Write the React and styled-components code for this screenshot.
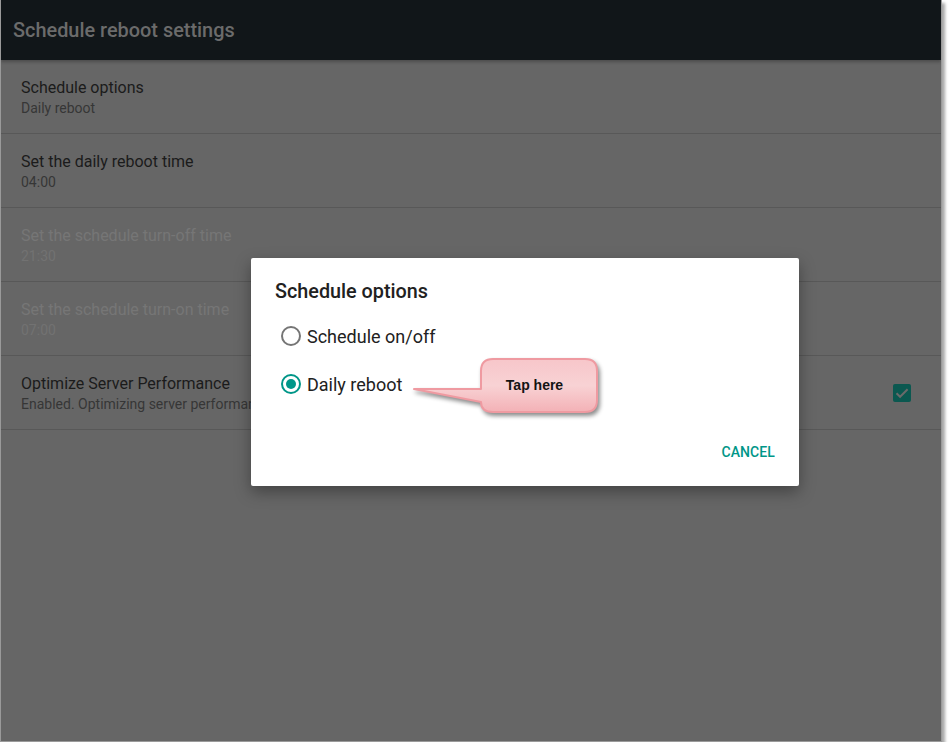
import React from 'react';
import styled, { createGlobalStyle } from 'styled-components';

const GlobalStyle = createGlobalStyle`
  html, body {
    margin: 0;
    padding: 0;
    background: #ffffff;
  }
  body {
    font-family: Roboto, "Noto Sans", sans-serif;
  }
`;

const Screen = styled.div`
  position: relative;
  box-sizing: border-box;
  width: 942px;
  height: 742px;
  border: 1px solid #9a9a9a;
  border-top: none;
  background: #666666;
  box-shadow: 3px 3px 3px rgba(0, 0, 0, 0.35);
  display: flex;
  flex-direction: column;
  overflow: hidden;
`;

const TitleBar = styled.header`
  height: 60px;
  flex-shrink: 0;
  background: #111619;
  display: flex;
  align-items: center;
  padding: 0 12px;
  box-shadow: 0 2px 3px rgba(0, 0, 0, 0.25);
  z-index: 1;
`;

const Title = styled.h1`
  margin: 0;
  font-size: 19.9px;
  font-weight: 500;
  color: #6b6b6b;
`;

const List = styled.div`
  display: flex;
  flex-direction: column;
`;

const Row = styled.div`
  box-sizing: border-box;
  height: 74px;
  padding: 18px 30px 0 20px;
  border-bottom: 1px solid #585858;
  display: flex;
  align-items: flex-start;
  justify-content: space-between;
`;

const RowText = styled.div`
  display: flex;
  flex-direction: column;
`;

const RowTitle = styled.div`
  font-size: 16px;
  line-height: 20px;
  color: ${(p) => (p.disabled ? '#767676' : '#1b1b1b')};
`;

const RowSub = styled.div`
  font-size: 14px;
  line-height: 20px;
  color: ${(p) => (p.disabled ? '#727272' : '#363636')};
`;

const Checkbox = styled.span`
  width: 18px;
  height: 18px;
  margin-top: 10px;
  border-radius: 2px;
  background: #0b5850;
  display: flex;
  align-items: center;
  justify-content: center;
`;

const Dialog = styled.div`
  position: absolute;
  left: 250px;
  top: 258px;
  width: 548px;
  height: 228px;
  box-sizing: border-box;
  background: #ffffff;
  border-radius: 2px;
  box-shadow: 0 6px 16px rgba(0, 0, 0, 0.35);
  display: flex;
  flex-direction: column;
  padding: 22px 0 0 0;
`;

const DialogTitle = styled.h2`
  margin: 0 0 8px 24px;
  font-size: 19.8px;
  line-height: 24px;
  font-weight: 500;
  color: #212121;
`;

const Option = styled.label`
  height: 48px;
  display: flex;
  align-items: center;
  gap: 6px;
  padding-left: 30px;
  font-size: 18px;
  color: #212121;
`;

const Radio = styled.span`
  box-sizing: border-box;
  width: 20px;
  height: 20px;
  border-radius: 50%;
  border: 2px solid ${(p) => (p.checked ? '#009688' : '#757575')};
  display: flex;
  align-items: center;
  justify-content: center;

  &::after {
    content: '';
    width: 10px;
    height: 10px;
    border-radius: 50%;
    background: #009688;
    display: ${(p) => (p.checked ? 'block' : 'none')};
  }
`;

const Actions = styled.div`
  margin-top: auto;
  display: flex;
  justify-content: flex-end;
  padding: 0 24px 16px 0;
`;

const TextButton = styled.button`
  border: none;
  background: none;
  padding: 0;
  height: 36px;
  font-family: Roboto, sans-serif;
  font-size: 14px;
  font-weight: 500;
  letter-spacing: 0.1px;
  color: #009688;
  cursor: pointer;
`;

const Callout = styled.div`
  position: absolute;
  left: 405px;
  top: 352px;
  width: 200px;
  height: 70px;
`;

const CalloutShape = styled.svg`
  position: absolute;
  inset: 0;
  overflow: visible;
  filter: drop-shadow(2px 3px 2px rgba(0, 0, 0, 0.45));
`;

const CalloutLabel = styled.span`
  position: absolute;
  left: 73px;
  top: 7px;
  width: 111px;
  height: 52px;
  display: flex;
  align-items: center;
  justify-content: center;
  font-family: "Liberation Sans", Arial, sans-serif;
  font-size: 14px;
  font-weight: bold;
  color: #141414;
`;

const rows = [
  { title: 'Schedule options', sub: 'Daily reboot' },
  { title: 'Set the daily reboot time', sub: '04:00' },
  { title: 'Set the schedule turn-off time', sub: '21:30', disabled: true },
  { title: 'Set the schedule turn-on time', sub: '07:00', disabled: true },
  {
    title: 'Optimize Server Performance',
    sub: 'Enabled. Optimizing server performance',
    checked: true,
  },
];

const CheckMark = () => (
  <svg width="18" height="18" viewBox="0 0 18 18">
    <path d="M3.5 9.2l3.6 3.6L14.6 5.3" fill="none" stroke="#6a6a6a" strokeWidth="2" />
  </svg>
);

export default function App() {
  return (
    <>
      <GlobalStyle />
      <Screen>
        <TitleBar>
          <Title>Schedule reboot settings</Title>
        </TitleBar>
        <List>
          {rows.map((row) => (
            <Row key={row.title}>
              <RowText>
                <RowTitle disabled={row.disabled}>{row.title}</RowTitle>
                <RowSub disabled={row.disabled}>{row.sub}</RowSub>
              </RowText>
              {row.checked && (
                <Checkbox>
                  <CheckMark />
                </Checkbox>
              )}
            </Row>
          ))}
        </List>

        <Dialog>
          <DialogTitle>Schedule options</DialogTitle>
          <Option>
            <Radio />
            Schedule on/off
          </Option>
          <Option>
            <Radio checked />
            Daily reboot
          </Option>
          <Actions>
            <TextButton>CANCEL</TextButton>
          </Actions>
        </Dialog>

        <Callout>
          <CalloutShape viewBox="405 352 200 70" width="200" height="70">
            <defs>
              <linearGradient id="calloutFill" x1="0" y1="0" x2="0" y2="1">
                <stop offset="0" stopColor="#f7c6ca" />
                <stop offset="0.5" stopColor="#f8d2d4" />
                <stop offset="1" stopColor="#f3b1b6" />
              </linearGradient>
            </defs>
            <path
              d="M492 359 H584 Q596 359 596 371 V400 Q596 412 584 412 H492 Q480 412 480 402 L413 389 L480 389 V371 Q480 359 492 359 Z"
              fill="url(#calloutFill)"
              stroke="#ef9aa1"
              strokeWidth="2"
              strokeLinejoin="round"
            />
          </CalloutShape>
          <CalloutLabel>Tap here</CalloutLabel>
        </Callout>
      </Screen>
    </>
  );
}
